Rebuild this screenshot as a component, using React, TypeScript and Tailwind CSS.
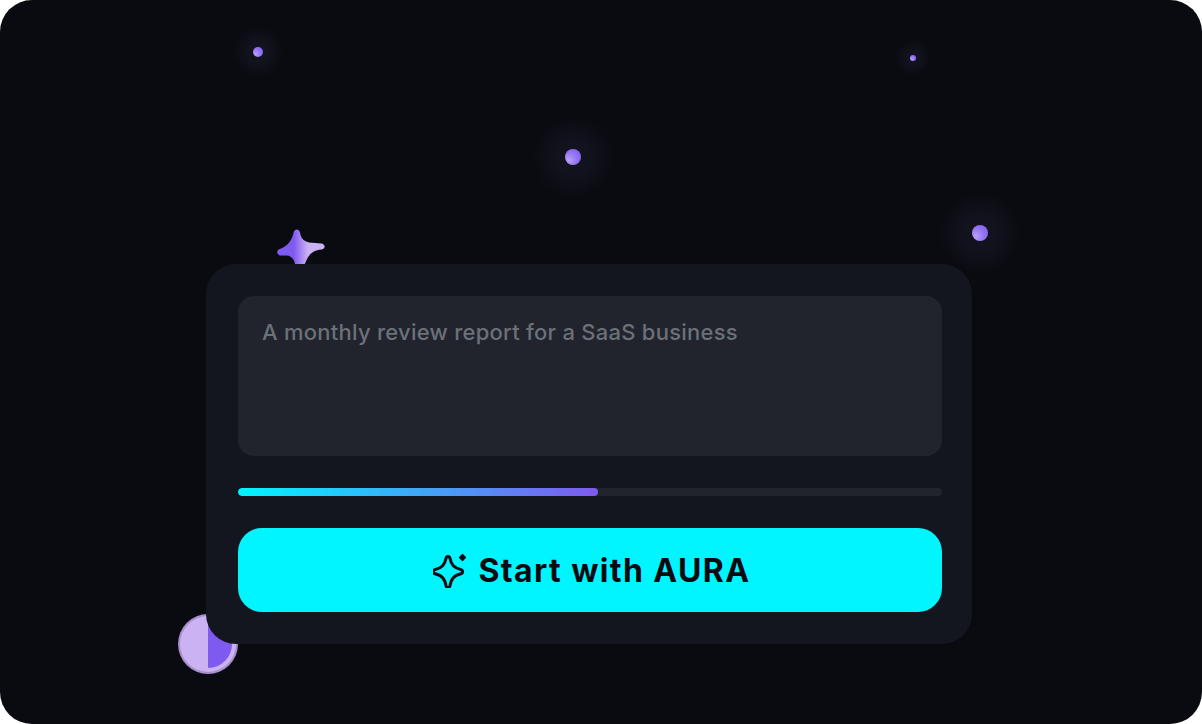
const dots = [
  { x: 258, y: 52, r: 5, g: 26 },
  { x: 912.5, y: 58, r: 3, g: 18 },
  { x: 573, y: 157, r: 8, g: 42 },
  { x: 980, y: 233, r: 8, g: 42 },
];

function Dot({ x, y, r, g }: { x: number; y: number; r: number; g: number }) {
  return (
    <>
      <div
        className="absolute rounded-full"
        style={{
          left: x - g,
          top: y - g,
          width: g * 2,
          height: g * 2,
          background:
            "radial-gradient(circle closest-side, rgba(125,130,210,0.08) 0%, rgba(125,130,210,0.055) 45%, rgba(125,130,210,0.02) 78%, rgba(125,130,210,0) 100%)",
        }}
      />
      <div
        className="absolute rounded-full bg-[radial-gradient(circle_at_25%_70%,#b9a0f3_0%,#9273f5_50%,#7f5af0_100%)]"
        style={{ left: x - r, top: y - r, width: r * 2, height: r * 2 }}
      />
    </>
  );
}

export default function App() {
  return (
    <div className="w-[1202px] h-[724px] bg-white font-['Inter',sans-serif]">
      <div className="relative w-full h-full rounded-[32px] bg-[#0a0b11] overflow-hidden pt-[264px] pl-[206px]">
        {dots.map((d) => (
          <Dot key={d.x} x={d.x} y={d.y} r={d.r} g={d.g} />
        ))}
        <svg className="absolute left-[276px] top-[228px]" width="50" height="40" viewBox="0 0 50 40">
          <defs>
            <linearGradient id="sp" x1="0" y1="0" x2="1" y2="0">
              <stop offset="0.35" stopColor="#7f5af0" />
              <stop offset="0.65" stopColor="#cbb2f2" />
            </linearGradient>
          </defs>
          <path
            d="M17.6 4.5C18.4 0.4 23 0.4 24 4.5C25 10 27 13 33 14.4L45.5 15.5C49.8 16.4 49.6 21 45.5 21.6C38 22.6 34 25 31 31L27 40H20C19 32 15.5 28 11 27.6L5.5 27.6C0.4 27.6 -0.2 22.4 3.8 21C11 18.5 16 13 17.6 4.5Z"
            fill="url(#sp)"
          />
        </svg>
        <div className="absolute left-[178px] top-[614px] w-[60px] h-[60px] rounded-full bg-[#a48fc9] p-[2px]">
          <div className="w-full h-full rounded-full bg-[#cbb2f2] p-1">
            <div className="w-full h-full rounded-full bg-[linear-gradient(90deg,#cbb2f2_50%,#7f5af0_50%)]" />
          </div>
        </div>
        <div className="relative w-[766px] h-[380px] rounded-[30px] bg-[#13161f] pl-8 pr-[30px] py-8 flex flex-col gap-8">
          <div className="h-[160px] shrink-0 rounded-[16px] bg-[#21242d] pl-6 pt-[23px] text-[22px] leading-[26px] font-medium text-[#6b7079] tracking-[0.25px]">
            A monthly review report for a SaaS business
          </div>
          <div className="h-2 shrink-0 rounded-full bg-[#21242d] overflow-hidden">
            <div className="h-full w-[360px] rounded-full bg-[linear-gradient(90deg,#00f5ff,#7f5af0)]" />
          </div>
          <div className="h-[84px] shrink-0 rounded-[24px] bg-[#00f5ff] flex items-center justify-center gap-[9px]">
            <svg className="ml-1" width="36" height="36" viewBox="0 0 36 36" fill="none" stroke="#0a0b11" strokeLinejoin="round" strokeLinecap="round">
              <g transform="translate(15 20) scale(1.3) translate(-16 -18.4)" strokeWidth="2.3">
                <path d="M16 6.5C16.9 6.5 17.3 7 17.5 7.8C18.6 13 20.5 15.2 26 16.6C26.8 16.8 27.2 17.4 27.2 18.2C27.2 19 26.8 19.6 26 19.8C20.5 21.2 18.6 23.4 17.5 29C17.3 29.8 16.9 30.3 16 30.3C15.1 30.3 14.7 29.8 14.5 29C13.4 23.4 11.5 21.2 6 19.8C5.2 19.6 4.8 19 4.8 18.2C4.8 17.4 5.2 16.8 6 16.6C11.5 15.2 13.4 13 14.5 7.8C14.7 7 15.1 6.5 16 6.5Z" />
              </g>
              <path d="M29.5 2.5L32.5 5.5L29.5 8.5L26.5 5.5Z" fill="#0a0b11" strokeWidth="1.2" />
            </svg>
            <span className="text-[32px] leading-none font-bold text-[#0a0b11] tracking-[1.4px] pt-[2px]">Start with AURA</span>
          </div>
        </div>
      </div>
    </div>
  );
}
